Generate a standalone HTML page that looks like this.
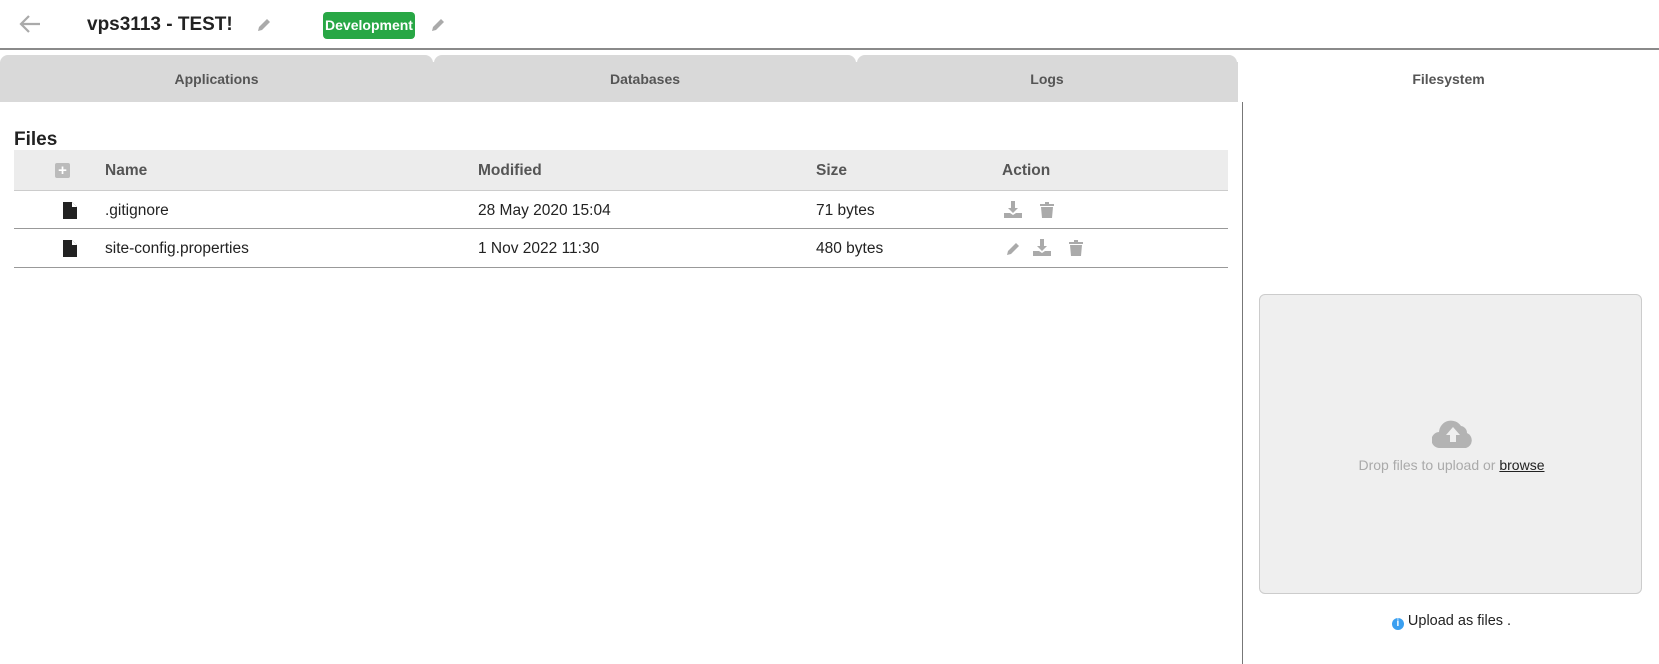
<!DOCTYPE html>
<html><head><style>
*{box-sizing:border-box;margin:0;padding:0}
body{width:1659px;height:664px;overflow:hidden;background:#fff;font-family:"Liberation Sans",Arial,sans-serif;color:#222;position:relative}
.a{position:absolute}
.tab{position:absolute;top:55px;height:47px;background:#d9d9d9;border-radius:8px 8px 0 0;font-weight:bold;font-size:14px;color:#555;text-align:center;line-height:49px}
.th{font-weight:bold;font-size:15.5px;color:#555}
.td{font-size:15.5px;color:#222}
</style></head><body>
<svg class="a" style="left:18px;top:13px" width="24" height="22" viewBox="0 0 24 22"><path d="M22 11H3M11 3L3 11l8 8" stroke="#aaa" stroke-width="2.2" fill="none"/></svg>
<div class="a" style="left:87px;top:14px;font-weight:bold;font-size:19px;color:#222">vps3113 - TEST!</div>
<svg class="a" style="left:256px;top:17px" width="16" height="16" viewBox="0 0 16 16"><path d="M2 14l1-4 8-8 3 3-8 8z" fill="#aaa"/></svg>
<div class="a" style="left:323px;top:12px;width:92px;height:27px;background:#28a745;border-radius:4px;color:#fff;font-weight:bold;font-size:14px;text-align:center;line-height:27px">Development</div>
<svg class="a" style="left:430px;top:17px" width="16" height="16" viewBox="0 0 16 16"><path d="M2 14l1-4 8-8 3 3-8 8z" fill="#aaa"/></svg>
<div class="a" style="left:0;top:48px;width:1659px;height:2px;background:#8a8a8a"></div>
<div class="a" style="left:0;top:62px;width:1238px;height:40px;background:#d9d9d9"></div>
<div class="tab" style="left:0;width:433px">Applications</div>
<div class="tab" style="left:434px;width:422px">Databases</div>
<div class="tab" style="left:857px;width:380px">Logs</div>
<div class="tab" style="left:1238px;width:421px;background:#fff">Filesystem</div>
<div class="a" style="left:1242px;top:102px;width:1px;height:562px;background:#777"></div>
<div class="a" style="left:14px;top:129px;font-weight:bold;font-size:19px">Files</div>
<div class="a" style="left:14px;top:150px;width:1214px;height:41px;background:#ececec;border-bottom:1px solid #ccc"></div>
<div class="a" style="left:55px;top:163px;width:15px;height:15px;background:#bbb;border-radius:2px;color:#fff;font-weight:bold;font-size:15px;line-height:15px;text-align:center">+</div>
<div class="a th" style="left:105px;top:162px">Name</div>
<div class="a th" style="left:478px;top:162px">Modified</div>
<div class="a th" style="left:816px;top:162px">Size</div>
<div class="a th" style="left:1002px;top:162px">Action</div>
<div class="a" style="left:14px;top:228px;width:1214px;height:1px;background:#999"></div>
<div class="a" style="left:14px;top:267px;width:1214px;height:1px;background:#999"></div>
<svg class="a" style="left:63px;top:202px" width="14" height="17" viewBox="0 0 14 17"><path d="M0 0h9l5 5v12H0z" fill="#222"/><path d="M9 0v5h5" fill="#fff"/></svg>
<svg class="a" style="left:63px;top:240px" width="14" height="17" viewBox="0 0 14 17"><path d="M0 0h9l5 5v12H0z" fill="#222"/><path d="M9 0v5h5" fill="#fff"/></svg>
<div class="a td" style="left:105px;top:202px">.gitignore</div>
<div class="a td" style="left:478px;top:202px">28 May 2020 15:04</div>
<div class="a td" style="left:816px;top:202px">71 bytes</div>
<div class="a td" style="left:105px;top:240px">site-config.properties</div>
<div class="a td" style="left:478px;top:240px">1 Nov 2022 11:30</div>
<div class="a td" style="left:816px;top:240px">480 bytes</div>
<svg class="a" style="left:1004px;top:201px" width="18" height="17" viewBox="0 0 18 17"><path d="M7 0h4v7h3l-5 5-5-5h3z M0 12h6l3 2 3-2h6v5H0z" fill="#aaa"/></svg>
<svg class="a" style="left:1040px;top:202px" width="14" height="16" viewBox="0 0 14 16"><path d="M0 2h14v2H0z M5 0h4v2H5z M1 5h12l-1 11H2z" fill="#aaa"/></svg>
<svg class="a" style="left:1005px;top:241px" width="16" height="16" viewBox="0 0 16 16"><path d="M2 14l1-4 8-8 3 3-8 8z" fill="#aaa"/></svg>
<svg class="a" style="left:1033px;top:239px" width="18" height="17" viewBox="0 0 18 17"><path d="M7 0h4v7h3l-5 5-5-5h3z M0 12h6l3 2 3-2h6v5H0z" fill="#aaa"/></svg>
<svg class="a" style="left:1069px;top:240px" width="14" height="16" viewBox="0 0 14 16"><path d="M0 2h14v2H0z M5 0h4v2H5z M1 5h12l-1 11H2z" fill="#aaa"/></svg>
<div class="a" style="left:1259px;top:294px;width:383px;height:300px;background:#efefef;border:1px solid #ccc;border-radius:6px"></div>
<svg class="a" style="left:1432px;top:418px" width="42" height="30" viewBox="0 0 42 30"><path d="M8 30a8 8 0 0 1-1-16A12 12 0 0 1 29 8a7 7 0 0 1 6 7 8 8 0 0 1-1 15z" fill="#b3b3b3"/><path d="M21 9l-7 8h4v7h6v-7h4z" fill="#efefef"/></svg>
<div class="a" style="left:1259px;top:457px;width:385px;text-align:center;font-size:14px;color:#aaa">Drop files to upload or <span style="color:#222;text-decoration:underline">browse</span></div>
<div class="a" style="left:1259px;top:613px;width:385px;text-align:center;font-size:14.5px;color:#222"><span style="display:inline-block;width:12px;height:12px;border-radius:50%;background:#3a9ff0;color:#fff;font-size:10px;line-height:12px;font-weight:bold;vertical-align:-1px">i</span> Upload as files .</div>
</body></html>
